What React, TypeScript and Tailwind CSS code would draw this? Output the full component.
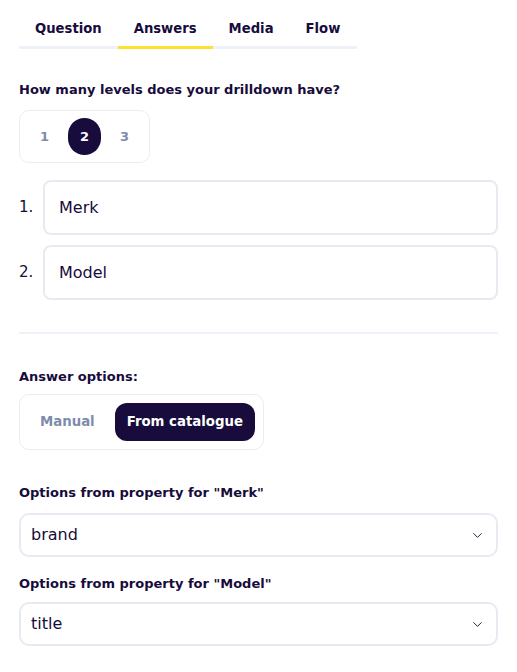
import React, { useState } from 'react';
import { ChevronDown } from 'lucide-react';

const tabs = ['Question', 'Answers', 'Media', 'Flow'];

function Tabs() {
  return (
    <div className="flex w-[338px] border-b-[3px] border-[#eef2f8]">
      {tabs.map((t) => (
        <div
          key={t}
          className={
            'px-4 pt-[19px] pb-[7px] -mb-[3px] text-[13.2px] leading-[20px] font-bold text-[#170c3c] ' +
            (t === 'Answers' ? 'border-b-[3px] border-[#fce22a]' : 'border-b-[3px] border-transparent')
          }
        >
          {t}
        </div>
      ))}
    </div>
  );
}

function LevelPicker() {
  const [level, setLevel] = useState(2);
  return (
    <div className="mt-[12px] inline-flex items-center gap-[7px] h-[53px] px-[8px] rounded-[10px] border border-[#e9eef5]">
      {[1, 2, 3].map((n) => (
        <button
          key={n}
          onClick={() => setLevel(n)}
          className={
            'w-[33px] h-[37px] rounded-full text-[13px] font-semibold flex items-center justify-center ' +
            (n === level ? 'bg-[#170c3c] text-white' : 'text-[#7d8cab]')
          }
        >
          {n}
        </button>
      ))}
    </div>
  );
}

function LevelInput({ n, value }: { n: number; value: string }) {
  return (
    <div className="flex items-center">
      <div className="w-[24px] text-[15px] text-[#170c3c]">{n}.</div>
      <div className="flex-1 h-[55px] flex items-center px-[14px] rounded-[8px] border-2 border-[#e6ebf2] text-[16px] text-[#170c3c]">
        {value}
      </div>
    </div>
  );
}

function SelectBox({ value }: { value: string }) {
  return (
    <div className="flex items-center justify-between h-[44px] pl-[10px] pr-[11px] rounded-[10px] border-2 border-[#e6ebf2] text-[16px] text-[#170c3c]">
      <span>{value}</span>
      <ChevronDown size={15} strokeWidth={1.5} className="text-[#170c3c]" />
    </div>
  );
}

export default function App() {
  return (
    <div className="min-h-screen bg-white px-[19px] text-[#170c3c]" style={{ fontFamily: '"DejaVu Sans", sans-serif' }}>
      <Tabs />

      <div className="mt-[33px] text-[13px] leading-[16px] font-bold">How many levels does your drilldown have?</div>
      <LevelPicker />

      <div className="mt-[17px] flex flex-col gap-[10px]">
        <LevelInput n={1} value="Merk" />
        <LevelInput n={2} value="Model" />
      </div>

      <div className="mt-[32px] border-t-2 border-[#eef2f8]" />

      <div className="mt-[35px] text-[13px] leading-[16px] font-bold">Answer options:</div>
      <div className="mt-[9px] inline-flex items-center gap-[20px] h-[56px] pl-[20px] pr-[8px] rounded-[10px] border border-[#e9eef5]">
        <span className="text-[13.3px] font-semibold text-[#7d8cab]">Manual</span>
        <span className="h-[38px] px-[12px] flex items-center rounded-[12px] bg-[#170c3c] text-white text-[13.3px] font-semibold">
          From catalogue
        </span>
      </div>

      <div className="mt-[35px] text-[13px] leading-[16px] font-bold">Options from property for "Merk"</div>
      <div className="mt-[12px]">
        <SelectBox value="brand" />
      </div>

      <div className="mt-[19px] text-[13px] leading-[16px] font-bold">Options from property for "Model"</div>
      <div className="mt-[10px]">
        <SelectBox value="title" />
      </div>
    </div>
  );
}
